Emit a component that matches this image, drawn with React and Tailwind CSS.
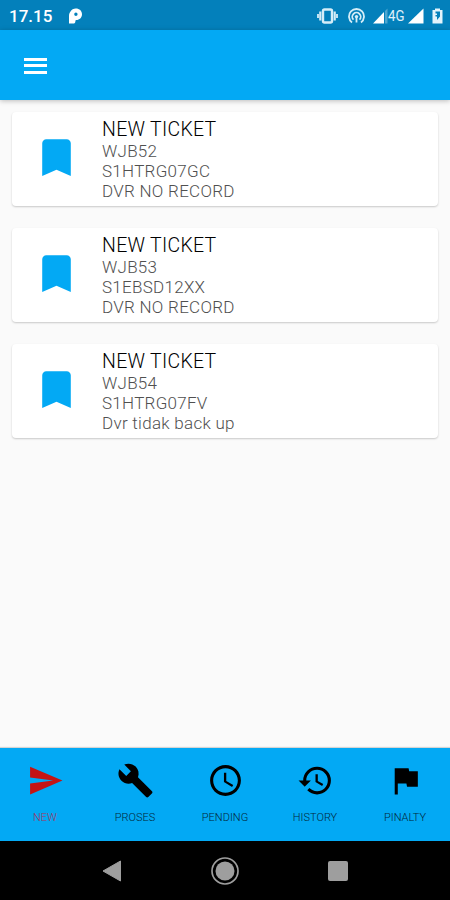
import { MdBookmark, MdSend, MdBuild, MdAccessTime, MdHistory, MdFlag } from 'react-icons/md';

const tickets = [
  { id: 'WJB52', serial: 'S1HTRG07GC', note: 'DVR NO RECORD' },
  { id: 'WJB53', serial: 'S1EBSD12XX', note: 'DVR NO RECORD' },
  { id: 'WJB54', serial: 'S1HTRG07FV', note: 'Dvr tidak back up' },
];

const tabs = [
  { label: 'NEW', Icon: MdSend, active: true },
  { label: 'PROSES', Icon: MdBuild },
  { label: 'PENDING', Icon: MdAccessTime },
  { label: 'HISTORY', Icon: MdHistory },
  { label: 'PINALTY', Icon: MdFlag },
];

const StatusBar = () => (
  <div className="flex h-[30px] shrink-0 items-center bg-[#0380bb] pt-0.5 pl-[9px] text-white">
    <span className="w-[60px] text-[17px] leading-none font-medium">17.15</span>
    <svg className="h-4 w-[13px]" viewBox="0 0 13 16" fill="currentColor">
      <path fillRule="evenodd" d="M1.500 3.500C2.500 1.500 4.500.4 6.800.4 10.500.4 13 2.800 13 6.200S10.500 12 7.300 12l-.9.500v.7c0 1.500-.8 2.300-2.300 2.300H0V8c0-2 .5-3.300 1.500-4.500zM6.900 4.600a1.700 1.700 0 1 0 0 3.400 1.700 1.700 0 0 0 0-3.400z" />
    </svg>
    <div className="ml-auto flex items-center pr-[7px]">
      <svg className="h-4 w-[21px] text-[#d5edf8]" viewBox="0 0 21 16" fill="none" stroke="currentColor">
        <rect x="6" y="1.500" width="9" height="13" rx="1.500" strokeWidth="2.400" />
        <path d="M3.300 3.500v9M17.700 3.500v9" strokeWidth="2.200" />
        <path d="M1 6v4M20 6v4" strokeWidth="1.800" />
      </svg>
      <svg className="ml-[10px] h-4 w-[17px] text-[#d5edf8]" viewBox="0 0 17 16" fill="none" stroke="currentColor" strokeWidth="1.800">
        <path d="M4 14.500a7.500 7.500 0 1 1 9 0M5.500 11.700a4.200 4.200 0 1 1 6 0" />
        <circle cx="8.500" cy="8.600" r="1.700" fill="currentColor" stroke="none" />
        <path d="M8.500 9v5.500" />
      </svg>
      <svg className="ml-2 h-4 w-[15px]" viewBox="0 0 15 16" fill="currentColor">
        <path d="M0 15.500 11 4v11.500z" />
        <path d="M12 3 14.500 .5v15H12z" opacity="0.300" />
      </svg>
      <span className="w-[17px] origin-left scale-x-[0.880] text-[15px] leading-none text-[#e0f1fa]">4G</span>
      <svg className="ml-[3px] h-4 w-4" viewBox="0 0 16 16" fill="currentColor">
        <path d="M0 15.500 15.500 .5v15z" />
      </svg>
      <svg className="ml-2 h-4 w-[11px]" viewBox="0 0 11 16">
        <path d="M3 .5h5V2h2.500v13.500H.5V2H3z" fill="#e3f3fb" />
        <path d="M3.500 3.500h4.500v5L5 12V8.500H3.500V7H5V5.500H3.500z" fill="#0380bb" />
      </svg>
    </div>
  </div>
);

const TicketCard = ({ ticket }) => (
  <div className="flex h-[94px] rounded bg-white pt-[5px] pl-[20px] shadow-[0_1px_2px_rgba(0,0,0,0.200)]">
    <MdBookmark className="mt-[15.500px] size-[49px] text-[#03a9f4]" />
    <div className="ml-[21px] pt-0.5 text-[17px] leading-5 font-light tracking-[0.280px] text-[#505050]">
      <h2 className="text-[19.500px] leading-[22px] font-light tracking-[0.300px] text-black">NEW TICKET</h2>
      <p>{ticket.id}</p>
      <p>{ticket.serial}</p>
      <p>{ticket.note}</p>
    </div>
  </div>
);

const App = () => {
  return (
    <div className="flex h-[900px] w-[450px] flex-col overflow-hidden bg-[#fafafa] font-['Roboto',sans-serif]">
      <StatusBar />
      <header className="flex h-[70px] shrink-0 items-center bg-[#03a9f4] pt-px pl-6 shadow-[0_1px_5px_rgba(0,0,0,0.250)]">
        <div className="flex flex-col gap-[3.500px]">
          <span className="h-[3px] w-[23px] bg-white" />
          <span className="h-[3px] w-[23px] bg-white" />
          <span className="h-[3px] w-[23px] bg-white" />
        </div>
      </header>

      <main className="flex flex-1 flex-col gap-[22px] px-3 pt-3">
        {tickets.map((ticket) => (
          <TicketCard key={ticket.id} ticket={ticket} />
        ))}
      </main>

      <nav className="grid h-[93px] shrink-0 grid-cols-5 bg-[#03a9f4] pt-[13.500px] shadow-[0_-1px_1px_rgba(0,0,0,0.150)]">
        {tabs.map(({ label, Icon, active }) => (
          <div key={label} className="flex flex-col items-center">
            <Icon className={`size-[37px] ${active ? 'text-[#c41414]' : 'text-black'}`} />
            <span className={`mt-3 text-[11px] leading-[14px] font-light ${active ? 'text-[#a0345f]' : 'text-[#02283a]'}`}>
              {label}
            </span>
          </div>
        ))}
      </nav>

      <div className="flex h-[59px] shrink-0 items-center bg-black pl-[102px] text-[#9e9e9e]">
        <svg className="h-[22px] w-5" viewBox="0 0 20 22" fill="currentColor">
          <path d="M1 11 18.500 1v20z" stroke="currentColor" strokeLinejoin="round" />
        </svg>
        <svg className="ml-[89px] size-7" viewBox="0 0 28 28" fill="currentColor">
          <circle cx="14" cy="14" r="13" fill="none" stroke="currentColor" strokeWidth="1.700" />
          <circle cx="14" cy="14" r="9.500" />
        </svg>
        <div className="ml-[89px] size-5 rounded-xs bg-[#9e9e9e]" />
      </div>
    </div>
  );
};

export default App;
